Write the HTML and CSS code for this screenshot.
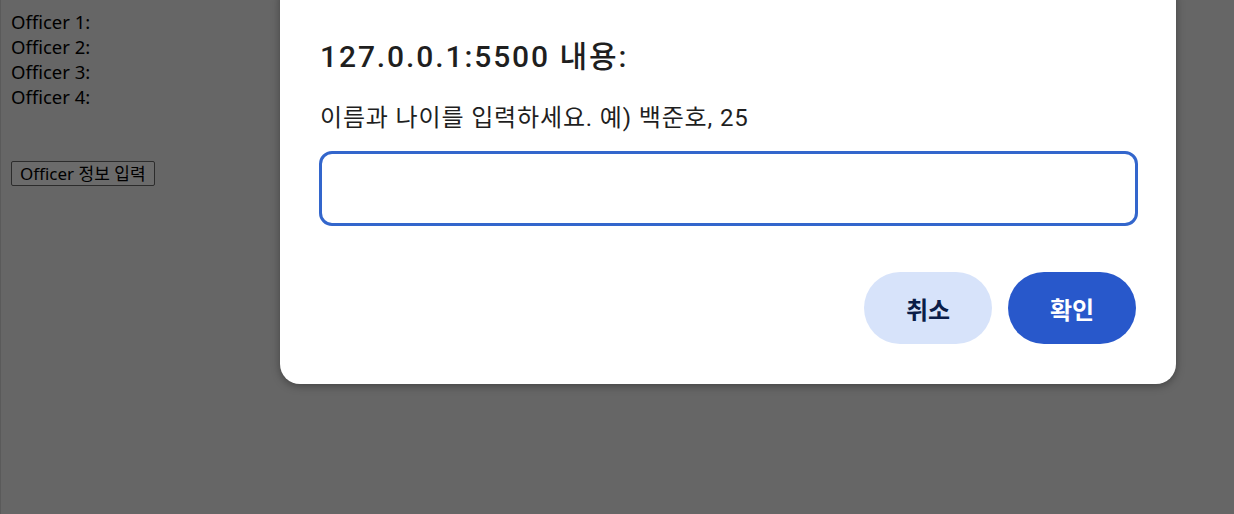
FILE: index.html
```html
<!DOCTYPE html>
<html lang="ko">
<head>
<meta charset="utf-8">
<link rel="stylesheet" href="styles.css">
</head>
<body>
<div class="page">
  <div class="officers">
    <div class="officer">Officer 1:</div>
    <div class="officer">Officer 2:</div>
    <div class="officer">Officer 3:</div>
    <div class="officer">Officer 4:</div>
  </div>
  <button class="input-btn">Officer 정보 입력</button>
</div>
<div class="overlay">
  <div class="dialog">
    <div class="title">127.0.0.1:5500 내용:</div>
    <div class="message">이름과 나이를 입력하세요. 예) 백준호, 25</div>
    <div class="field"></div>
    <div class="actions">
      <button class="btn cancel">취소</button>
      <button class="btn ok">확인</button>
    </div>
  </div>
</div>
</body>
</html>
```
FILE: styles.css
```css
html, body {
  margin: 0;
  height: 100%;
}
body {
  background: #666666;
  font-family: "Noto Sans", "Noto Sans CJK KR", sans-serif;
  border-left: 1px solid #5a5a5a;
  box-sizing: border-box;
  overflow: hidden;
}
.page {
  padding: 9px 10px;
}
.officers {
  display: flex;
  flex-direction: column;
  font-size: 18.5px;
  line-height: 25px;
  color: #000;
}
.input-btn {
  margin-top: 52px;
  font-family: "Noto Sans", "Noto Sans CJK KR", sans-serif;
  font-size: 17px;
  height: 25px;
  padding: 0 8px;
  background: #6b6b6b;
  border: 1px solid #2c2c2c;
  border-radius: 2px;
  color: #000;
  line-height: 21px;
}
.overlay {
  position: absolute;
  top: 0;
  left: 0;
  right: 0;
  bottom: 0;
}
.dialog {
  position: absolute;
  left: 280px;
  top: -20px;
  width: 896px;
  height: 404px;
  box-sizing: border-box;
  background: #fff;
  border-radius: 20px;
  box-shadow: 0 2px 8px rgba(0,0,0,0.35);
  padding: 57px 40px 0 40px;
  display: flex;
  flex-direction: column;
  font-family: Roboto, "Noto Sans CJK KR", sans-serif;
}
.title {
  font-size: 30px;
  font-weight: 500;
  color: #1f1f1f;
  line-height: 40px;
  letter-spacing: 1.9px;
}
.message {
  margin-top: 21px;
  font-size: 24px;
  color: #1f1f1f;
  line-height: 40px;
  letter-spacing: 0.85px;
}
.field {
  margin-top: 13px;
  height: 75px;
  width: 819px;
  margin-left: -1px;
  box-sizing: border-box;
  border: 3px solid #3366cc;
  border-radius: 13px;
}
.actions {
  display: flex;
  justify-content: flex-end;
  gap: 16px;
  margin-top: 46px;
}
.btn {
  width: 128px;
  height: 72px;
  border: none;
  border-radius: 36px;
  font-family: Roboto, "Noto Sans CJK KR", sans-serif;
  font-size: 24px;
  font-weight: 700;
}
.cancel {
  background: #d7e3fa;
  color: #0b1d48;
}
.ok {
  background: #2858cb;
  color: #fff;
}
```
